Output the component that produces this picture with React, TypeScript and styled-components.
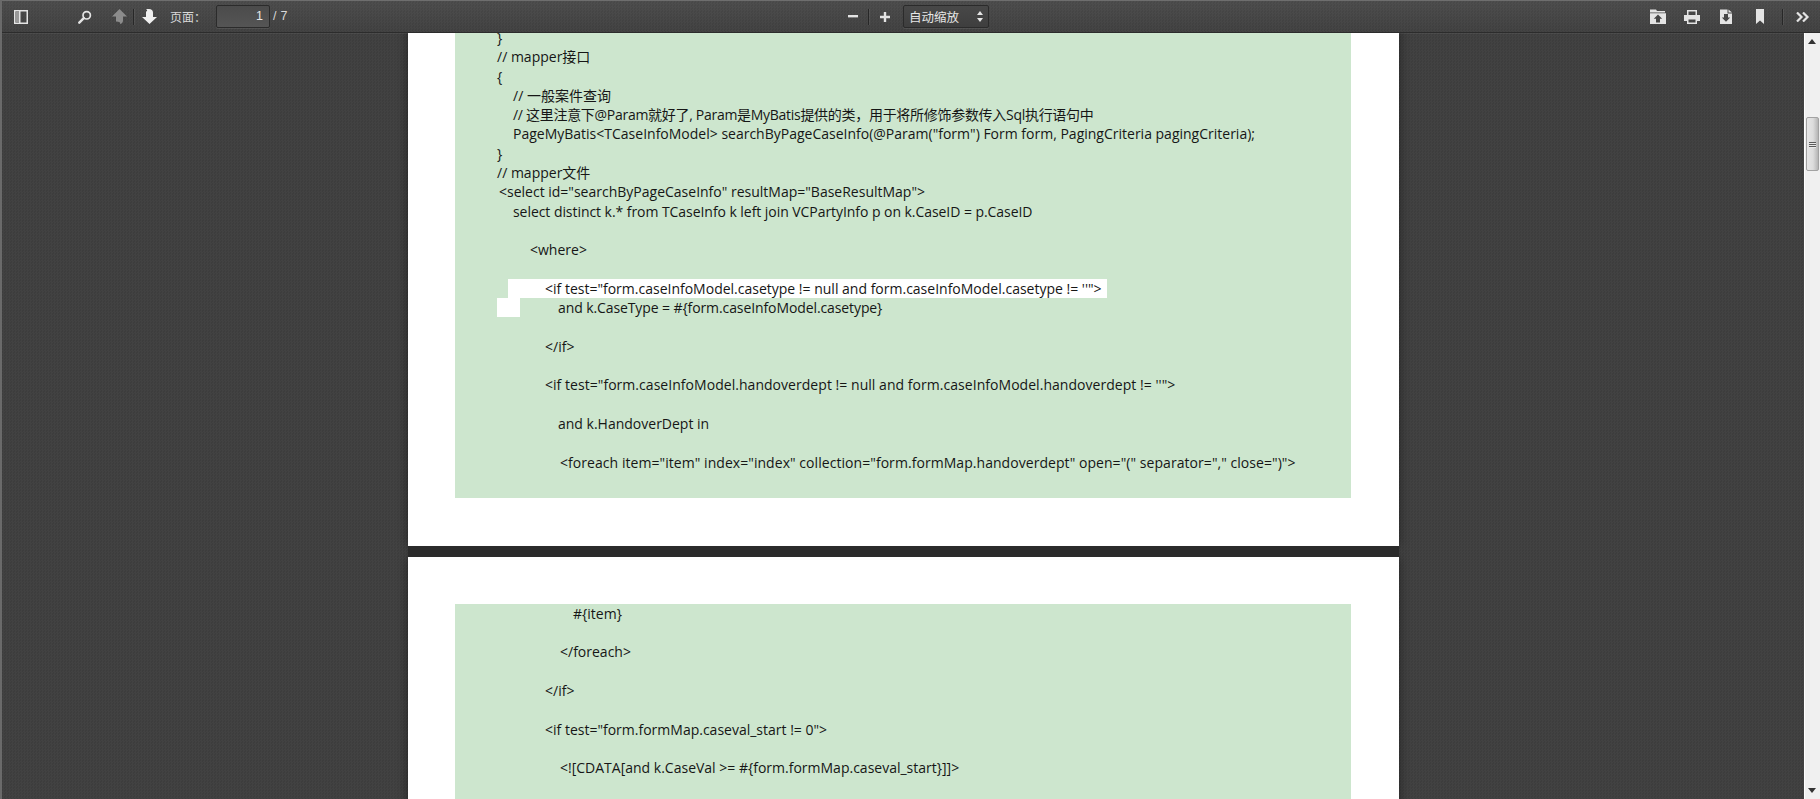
import styled, { createGlobalStyle } from "styled-components";

const GlobalStyle = createGlobalStyle`
  html, body {
    margin: 0;
    padding: 0;
    height: 100%;
    overflow: hidden;
    background: #3e3e3e;
  }
`;

const noise = `repeating-conic-gradient(rgba(255,255,255,0.018) 0 25%, rgba(0,0,0,0.018) 0 50%) 0 0 / 3px 3px`;

const Shell = styled.div`
  width: 1820px;
  height: 799px;
  display: flex;
  flex-direction: column;
  overflow: hidden;
  border-left: 2px solid #6a6a6a;
  box-sizing: border-box;
`;

const Toolbar = styled.div`
  height: 33px;
  flex: none;
  box-sizing: border-box;
  display: flex;
  align-items: center;
  padding-left: 5px;
  padding-right: 2px;
  border-top: 1px solid #6e6e6e;
  border-bottom: 1px solid #2c2c2c;
  background: ${noise}, linear-gradient(#4a4a4a, #3f3f3f);
  box-shadow: 0 1px 0 rgba(255, 255, 255, 0.06);
  position: relative;
  z-index: 2;
`;

const LeftGroup = styled.div`
  width: 836px;
  display: flex;
  align-items: center;
`;

const MiddleGroup = styled.div`
  display: flex;
  align-items: center;
`;

const RightGroup = styled.div`
  margin-left: auto;
  display: flex;
  align-items: center;
`;

const ToolButton = styled.div<{ $w: number; $ml?: number }>`
  width: ${(p) => p.$w}px;
  margin-left: ${(p) => p.$ml ?? 0}px;
  height: 24px;
  display: flex;
  align-items: center;
  justify-content: center;
  flex: none;
`;

const Separator = styled.div<{ $ml?: number }>`
  width: 1px;
  height: 16px;
  margin-left: ${(p) => p.$ml ?? 0}px;
  background: #272727;
  box-shadow: 1px 0 0 rgba(255, 255, 255, 0.08);
  flex: none;
`;

const PageLabel = styled.span`
  font-family: "Noto Sans CJK SC", sans-serif;
  font-size: 12px;
  line-height: 20px;
  color: #d9d9d9;
  margin-left: 6px;
`;

const PageInput = styled.div`
  width: 54px;
  height: 23px;
  margin-left: 10px;
  box-sizing: border-box;
  border: 1px solid #2b2b2b;
  border-radius: 2px;
  background: linear-gradient(#4b4b4b, #555);
  box-shadow: 0 1px 0 rgba(255, 255, 255, 0.08);
  color: #e6e6e6;
  font-family: "Liberation Sans", sans-serif;
  font-size: 12.5px;
  line-height: 21px;
  text-align: right;
  padding-right: 6px;
`;

const PageCount = styled.span`
  font-family: "Liberation Sans", sans-serif;
  font-size: 12.5px;
  color: #d9d9d9;
  margin-left: 3px;
  letter-spacing: 0.3px;
  position: relative;
  top: -1px;
`;

const ZoomSelect = styled.div`
  width: 86px;
  height: 23px;
  margin-left: 2px;
  box-sizing: border-box;
  border: 1px solid #2b2b2b;
  border-radius: 2px;
  background: linear-gradient(#484848, #3e3e3e);
  box-shadow: 0 1px 0 rgba(255, 255, 255, 0.08);
  display: flex;
  align-items: center;
  justify-content: space-between;
  padding: 0 5px 0 5px;
  color: #e6e6e6;
  font-family: "Noto Sans CJK SC", sans-serif;
  font-size: 12.5px;
`;

const Body = styled.div`
  flex: 1;
  display: flex;
  min-height: 0;
`;

const Viewer = styled.div`
  flex: 1;
  min-width: 0;
  overflow: hidden;
  padding-left: 406px;
  background: ${noise}, #3e3e3e;
`;

const Page = styled.div<{ $pad: number; $scroll?: number }>`
  width: 991px;
  box-sizing: border-box;
  background: #fff;
  margin-top: ${(p) => p.$scroll ?? 0}px;
  padding: ${(p) => p.$pad}px 48px 48px 47px;
  box-shadow: 0 0 10px rgba(0, 0, 0, 0.45);
`;

const Gap = styled.div`
  width: 991px;
  height: 11px;
  background: #2b2b2b;
  position: relative;
`;

const Sheet = styled.div<{ $pb: number }>`
  background: #cde6ce;
  padding: 0 0 ${(p) => p.$pb}px;
  font-family: "Open Sans", "Noto Sans CJK SC", sans-serif;
  font-size: 14px;
  line-height: 19.3px;
  color: #161616;
`;

const Line = styled.div<{ $indent: number; $ls?: number }>`
  height: 19.3px;
  padding-left: ${(p) => p.$indent}px;
  letter-spacing: ${(p) => p.$ls ?? 0}px;
  white-space: pre;
`;

const SelectedLine = styled.div`
  height: 19.3px;
  width: 599px;
  margin-left: 53px;
  padding-left: 37px;
  box-sizing: border-box;
  background: #fff;
  white-space: pre;
`;

const SelectedStub = styled.span`
  display: inline-block;
  width: 23px;
  height: 19.3px;
  margin-left: 42px;
  margin-right: 38px;
  background: #fff;
  vertical-align: top;
`;

const Scrollbar = styled.div`
  width: 16px;
  flex: none;
  display: flex;
  flex-direction: column;
  align-items: center;
  background: #f0f0f0;
  box-shadow: inset 1px 0 0 #fff;
`;

const ScrollArrow = styled.div`
  height: 17px;
  width: 100%;
  flex: none;
  display: flex;
  align-items: center;
  justify-content: center;
`;

const ScrollTrack = styled.div`
  flex: 1;
  width: 100%;
  padding-top: 67px;
  box-sizing: border-box;
`;

const ScrollThumb = styled.div`
  width: 13px;
  height: 54px;
  margin-left: 2px;
  box-sizing: border-box;
  border: 1px solid #a2a2a2;
  border-radius: 2px;
  background: linear-gradient(90deg, #e6e6e6, #dcdcdc 55%, #b5b5b5);
  display: flex;
  flex-direction: column;
  align-items: center;
  justify-content: center;
  gap: 1px;
`;

const Grip = styled.div`
  width: 7px;
  height: 1px;
  background: #5b5b5b;
  box-shadow: 0 1px 0 #e8e8e8;
`;

const ICON = "#e4e4e4";

const Triangle = ({ up }: { up?: boolean }) => (
  <svg width="8" height="5" viewBox="0 0 8 5">
    <path d={up ? "M4 0 8 5H0Z" : "M0 0H8L4 5Z"} fill="#333" />
  </svg>
);

const SidebarIcon = () => (
  <svg width="14" height="14" viewBox="0 0 14 14">
    <path d="M0 0H14V14H0Z M1.5 1.5V12.5H5V1.5Z M6.5 1.5V12.5H12.5V1.5Z" fill={ICON} fillRule="evenodd" />
    <rect x="1.5" y="1.5" width="3.5" height="11" fill="#9a9a9a" />
  </svg>
);

const SearchIcon = () => (
  <svg width="14" height="14" viewBox="0 0 14 14" fill="none">
    <circle cx="8.7" cy="5.3" r="3.7" stroke={ICON} strokeWidth="1.7" />
    <path d="M5.8 8.2 1.3 12.7" stroke={ICON} strokeWidth="2.4" strokeLinecap="round" />
  </svg>
);

const UpIcon = () => (
  <svg width="15" height="15" viewBox="0 0 15 15">
    <path d="M7.5 0 15 7.5H11V11.5C11 13.5 9.5 15 8 15 8.8 13.5 7.5 12.5 4 12.5V7.5H0Z" fill="#8c8c8c" />
  </svg>
);

const DownIcon = () => (
  <svg width="15" height="15" viewBox="0 0 15 15">
    <path d="M4 0H7C9.5 0 11 1.5 11 3.5V8H15L7.5 15 0 8H4V2.5C5.5 2.5 5.5 1 4 0Z" fill="#efefef" />
  </svg>
);

const MinusIcon = () => (
  <svg width="10" height="3" viewBox="0 0 10 3">
    <rect width="10" height="2.4" fill={ICON} />
  </svg>
);

const PlusIcon = () => (
  <svg width="10" height="10" viewBox="0 0 10 10">
    <path d="M3.8 0H6.2V3.8H10V6.2H6.2V10H3.8V6.2H0V3.8H3.8Z" fill={ICON} />
  </svg>
);

const FolderIcon = () => (
  <svg width="16" height="15" viewBox="0 0 16 15">
    <path d="M0 0.5H6L7 2H15V3.4H0Z M0 4.2H16V15H0Z M8 5.5 3.8 9.8H6V13.5H10V9.8H12.2Z" fill={ICON} fillRule="evenodd" />
  </svg>
);

const PrintIcon = () => (
  <svg width="16" height="14" viewBox="0 0 16 14">
    <path d="M3 0H13V5H16V11H13V14H3V11H0V5H3Z M4.5 1.5V5H11.5V1.5Z M4.5 9.5V12.5H11.5V9.5Z" fill={ICON} fillRule="evenodd" />
  </svg>
);

const SaveIcon = () => (
  <svg width="12" height="15" viewBox="0 0 12 15">
    <path d="M0 0.5H7.5V4.5H12V15H0Z M4 5V8.5H1.8L6 12.8 10.2 8.5H8V5Z" fill={ICON} fillRule="evenodd" />
    <path d="M8.5 0.5 12 3.5H8.5Z" fill={ICON} />
  </svg>
);

const BookmarkIcon = () => (
  <svg width="8" height="15" viewBox="0 0 8 15">
    <path d="M0 0H8V15L4 11.5 0 15Z" fill={ICON} />
  </svg>
);

const ChevronsIcon = () => (
  <svg width="14" height="10" viewBox="0 0 14 10" fill="none" stroke={ICON} strokeWidth="2.2">
    <path d="M1 0.5 5.5 5 1 9.5" />
    <path d="M7 0.5 11.5 5 7 9.5" />
  </svg>
);

type TextLine = { t: string; i: number; ls?: number };

const firstPage: TextLine[] = [
  { t: "}", i: 42 },
  { t: "// mapper接口", i: 42 },
  { t: "{", i: 42 },
  { t: "// 一般案件查询", i: 58 },
  { t: "// 这里注意下@Param就好了, Param是MyBatis提供的类，用于将所修饰参数传入Sql执行语句中", i: 58, ls: -0.29 },
  { t: 'PageMyBatis<TCaseInfoModel> searchByPageCaseInfo(@Param("form") Form form, PagingCriteria pagingCriteria);', i: 58 },
  { t: "}", i: 42 },
  { t: "// mapper文件", i: 42 },
  { t: '<select id="searchByPageCaseInfo" resultMap="BaseResultMap">', i: 44 },
  { t: "select distinct k.* from TCaseInfo k left join VCPartyInfo p on k.CaseID = p.CaseID", i: 58, ls: -0.055 },
  { t: "", i: 0 },
  { t: "<where>", i: 75 },
  { t: "", i: 0 },
];

const firstPageRest: TextLine[] = [
  { t: "", i: 0 },
  { t: "</if>", i: 90 },
  { t: "", i: 0 },
  { t: '<if test="form.caseInfoModel.handoverdept != null and form.caseInfoModel.handoverdept != \'\'">', i: 90, ls: 0.04 },
  { t: "", i: 0 },
  { t: "and k.HandoverDept in", i: 103 },
  { t: "", i: 0 },
  { t: '<foreach item="item" index="index" collection="form.formMap.handoverdept" open="(" separator="," close=")">', i: 105, ls: 0.054 },
];

const secondPage: TextLine[] = [
  { t: "#{item}", i: 118 },
  { t: "", i: 0 },
  { t: "</foreach>", i: 105 },
  { t: "", i: 0 },
  { t: "</if>", i: 90 },
  { t: "", i: 0 },
  { t: '<if test="form.formMap.caseval_start != 0">', i: 90 },
  { t: "", i: 0 },
  { t: "<![CDATA[and k.CaseVal >= #{form.formMap.caseval_start}]]>", i: 105 },
  { t: "", i: 0 },
  { t: "", i: 0 },
];

export default function App() {
  return (
    <>
      <GlobalStyle />
      <Shell>
        <Toolbar>
          <LeftGroup>
            <ToolButton $w={28}>
              <SidebarIcon />
            </ToolButton>
            <ToolButton $w={28} $ml={36}>
              <SearchIcon />
            </ToolButton>
            <ToolButton $w={28} $ml={6}>
              <UpIcon />
            </ToolButton>
            <Separator />
            <ToolButton $w={30}>
              <DownIcon />
            </ToolButton>
            <PageLabel>页面：</PageLabel>
            <PageInput>1</PageInput>
            <PageCount>/ 7</PageCount>
          </LeftGroup>
          <MiddleGroup>
            <ToolButton $w={20}>
              <MinusIcon />
            </ToolButton>
            <Separator $ml={5} />
            <ToolButton $w={32}>
              <PlusIcon />
            </ToolButton>
            <ZoomSelect>
              <span>自动缩放</span>
              <svg width="6" height="11" viewBox="0 0 6 11">
                <path d="M3 0 6 4H0Z M0 7H6L3 11Z" fill="#e4e4e4" />
              </svg>
            </ZoomSelect>
          </MiddleGroup>
          <RightGroup>
            <ToolButton $w={30}>
              <FolderIcon />
            </ToolButton>
            <ToolButton $w={30} $ml={4}>
              <PrintIcon />
            </ToolButton>
            <ToolButton $w={30} $ml={4}>
              <SaveIcon />
            </ToolButton>
            <ToolButton $w={30} $ml={4}>
              <BookmarkIcon />
            </ToolButton>
            <Separator $ml={7} />
            <ToolButton $w={30} $ml={5}>
              <ChevronsIcon />
            </ToolButton>
          </RightGroup>
        </Toolbar>
        <Body>
          <Viewer>
            <Page $pad={0} $scroll={-5}>
              <Sheet $pb={26}>
                {firstPage.map((l, n) => (
                  <Line key={n} $indent={l.i} $ls={l.ls}>{l.t}</Line>
                ))}
                <SelectedLine>{'<if test="form.caseInfoModel.casetype != null and form.caseInfoModel.casetype != \'\'">'}</SelectedLine>
                <Line $indent={0} $ls={-0.1}>
                  <SelectedStub />
                  and k.CaseType = #{"{"}form.caseInfoModel.casetype{"}"}
                </Line>
                {firstPageRest.map((l, n) => (
                  <Line key={n} $indent={l.i} $ls={l.ls}>{l.t}</Line>
                ))}
              </Sheet>
            </Page>
            <Gap />
            <Page $pad={47}>
              <Sheet $pb={0}>
                {secondPage.map((l, n) => (
                  <Line key={n} $indent={l.i} $ls={l.ls}>{l.t}</Line>
                ))}
              </Sheet>
            </Page>
          </Viewer>
          <Scrollbar>
            <ScrollArrow>
              <Triangle up />
            </ScrollArrow>
            <ScrollTrack>
              <ScrollThumb>
                <Grip />
                <Grip />
                <Grip />
              </ScrollThumb>
            </ScrollTrack>
            <ScrollArrow>
              <Triangle />
            </ScrollArrow>
          </Scrollbar>
        </Body>
      </Shell>
    </>
  );
}
